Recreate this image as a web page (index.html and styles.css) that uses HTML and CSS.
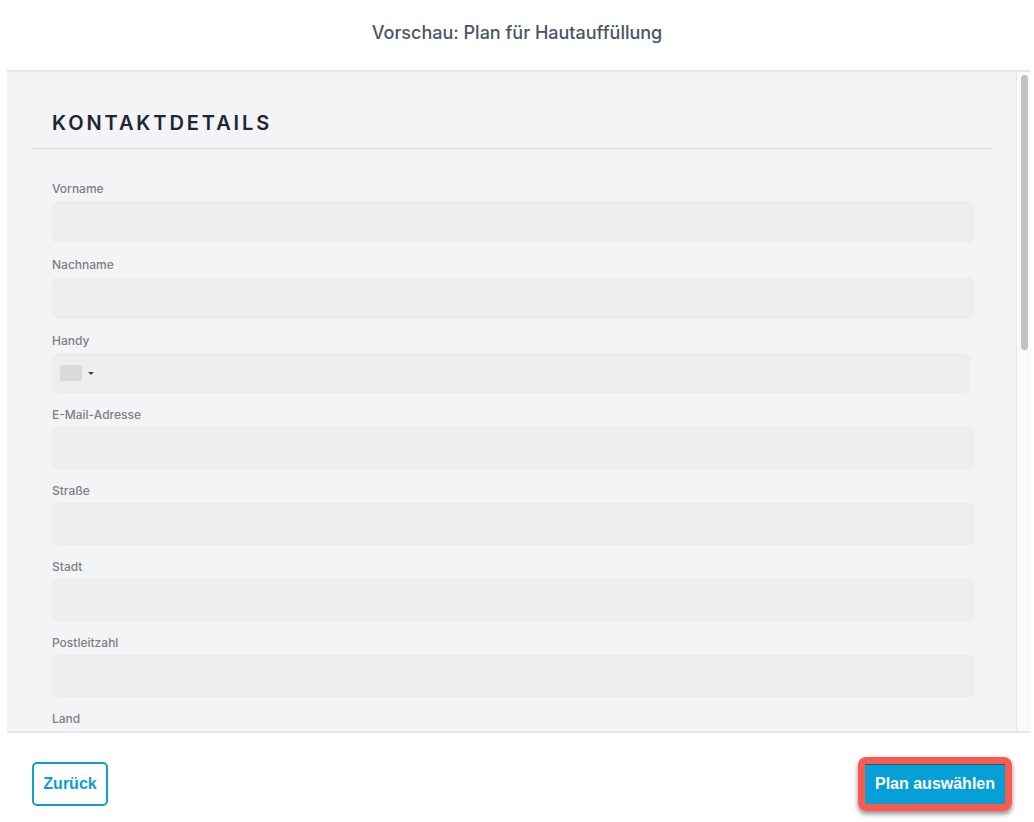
FILE: index.html
```html
<!DOCTYPE html>
<html>
<head>
<title>Vorschau</title>
<link rel="stylesheet" href="styles.css">
</head>
<body>

<div class="modal">
	<div class="modal_title">Vorschau: Plan für Hautauffüllung</div>
	<div class="preview">
		<div class="preview_body">
			<div class="section_caption">Kontaktdetails</div>
			<div class="form">
				<div class="field"><label>Vorname</label><div class="input"></div></div>
				<div class="field"><label>Nachname</label><div class="input"></div></div>
				<div class="field"><label>Handy</label>
					<div class="input phone"><span class="flag"></span><span class="caret"></span></div>
				</div>
				<div class="field"><label>E-Mail-Adresse</label><div class="input"></div></div>
				<div class="field"><label>Straße</label><div class="input"></div></div>
				<div class="field"><label>Stadt</label><div class="input"></div></div>
				<div class="field"><label>Postleitzahl</label><div class="input"></div></div>
				<div class="field"><label>Land</label><div class="input"></div></div>
			</div>
		</div>
		<div class="scroll_track"><div class="scroll_thumb"></div></div>
	</div>
	<div class="modal_footer">
		<button class="btn_back">Zurück</button>
		<div class="highlight">
			<button class="btn_select">Plan auswählen</button>
		</div>
	</div>
</div>

</body>
</html>
```

FILE: styles.css
```css
	body
	{
		margin : 0;
		background-color : white;
		font-family : Inter, "Noto Sans", sans-serif;
	}
	.modal
	{
		width : 1034px;
		height : 822px;
		display : flex;
		flex-direction : column;
	}
	.modal_title
	{
		box-sizing : border-box;
		height : 70px;
		padding-top : 22px;
		line-height : 22px;
		text-align : center;
		font-size : 18px;
		font-weight : 500;
		color : #4a5568;
	}
	.preview
	{
		box-sizing : border-box;
		margin-left : 7px;
		width : 1024px;
		height : 663px;
		border-top : 2px solid #e6e8eb;
		border-bottom : 2px solid #e6e8eb;
		background-color : #f3f4f6;
		display : flex;
		overflow : hidden;
	}
	.preview_body
	{
		flex : 1;
		padding : 0 25px 0 25px;
	}
	.scroll_track
	{
		box-sizing : border-box;
		width : 15px;
		padding : 3px 3px 0 4px;
		background-color : #fafafa;
		border-left : 1px solid #e8e8e8;
	}
	.scroll_thumb
	{
		height : 275px;
		border-radius : 4px;
		background-color : #c2c2c2;
	}
	.section_caption
	{
		margin-top : 39px;
		padding : 0 20px 12px 20px;
		line-height : 25px;
		border-bottom : 1px solid #d9dbde;
		font-size : 20px;
		font-weight : 600;
		letter-spacing : 2.9px;
		text-transform : uppercase;
		color : #1e2533;
	}
	.form
	{
		padding : 33px 16px 0 20px;
		display : flex;
		flex-direction : column;
		gap : 15px;
	}
	.field
	{
		display : flex;
		flex-direction : column;
		gap : 5px;
	}
	.field label
	{
		font-size : 12px;
		line-height : 14px;
		font-weight : 500;
		color : #7d7f82;
	}
	.input
	{
		height : 42px;
		border-radius : 6px;
		background-color : #efeeec;
	}
	.phone
	{
		height : 40px;
		margin-right : 4px;
		display : flex;
		align-items : center;
		padding-left : 8px;
		gap : 6px;
	}
	.flag
	{
		width : 22px;
		height : 16px;
		border-radius : 2px;
		background-color : #d9d9d9;
	}
	.caret
	{
		width : 0;
		height : 0;
		border-left : 3px solid transparent;
		border-right : 3px solid transparent;
		border-top : 3px solid #444;
	}
	.modal_footer
	{
		display : flex;
		justify-content : space-between;
		align-items : center;
		padding : 24px 22px 0 32px;
	}
	button
	{
		font-family : "Liberation Sans", Arial, sans-serif;
		font-size : 16px;
		font-weight : bold;
		cursor : pointer;
	}
	.btn_back
	{
		width : 76px;
		height : 44px;
		padding : 0;
		border : 2px solid #0c9fd8;
		border-radius : 5px;
		background-color : white;
		color : #0c9dd6;
	}
	.highlight
	{
		border : 7px solid #fd5a4f;
		border-radius : 8px;
		box-shadow : 0 3px 5px rgba(0,0,0,0.45);
		display : flex;
	}
	.btn_select
	{
		width : 140px;
		height : 40px;
		padding : 0;
		border : none;
		background-color : #06a0d7;
		box-shadow : inset 0 1px 0 rgba(0,0,0,0.35);
		color : white;
	}
	.btn_select:hover, .btn_back:hover
	{
		opacity : 0.8;
	}
```
